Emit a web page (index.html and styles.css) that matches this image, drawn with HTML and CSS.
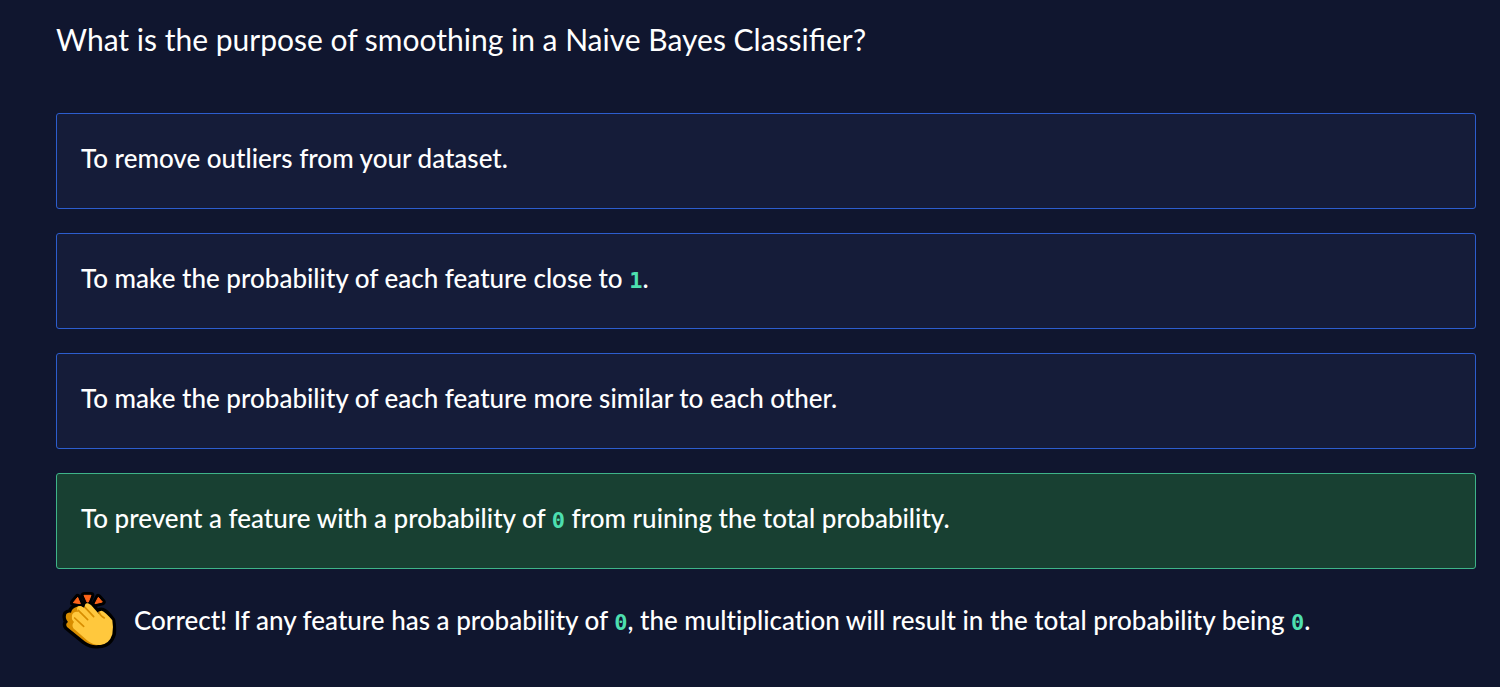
FILE: index.html
```html
<!DOCTYPE html>
<html lang="en">
<head>
<meta charset="utf-8">
<meta name="viewport" content="width=device-width, initial-scale=1">
<title>Naive Bayes Quiz</title>
<link rel="stylesheet" href="styles.css">
</head>
<body>
<main class="quiz">
  <h1 class="question">What is the purpose of smoothing in a Naive Bayes Classifier?</h1>
  <div class="options">
    <button class="option" type="button">To remove outliers from your dataset.</button>
    <button class="option" type="button">To make the probability of each feature close to <code>1</code>.</button>
    <button class="option" type="button">To make the probability of each feature more similar to each other.</button>
    <button class="option correct" type="button">To prevent a feature with a probability of <code>0</code> from ruining the total probability.</button>
  </div>
  <div class="feedback" role="status">
    <svg class="clap" viewBox="36 30 168 180" aria-hidden="true">
      <g stroke="#000" stroke-width="20" stroke-linejoin="round" fill="#000">
        <path d="M70 68L83 52L92 71ZM102 46H123L114 66ZM135 71L145 52L157 66Z"/>
        <path d="M81 83Q88 75 98 82Q103 68 114 71Q119 73 145 100Q146 91 157 93Q168 96 186 121Q190 140 188 162Q178 194 147 195Q125 199 104 184L51 141Q45 132 54 126Q44 115 49 102Q54 96 63 98Q65 84 81 83Z"/>
      </g>
      <path fill="#ff6419" stroke="#ff6419" stroke-width="3" stroke-linejoin="round" d="M70 68L83 52L91 71ZM102 46H123L115 66H111ZM135 71L145 52L157 66Z"/>
      <path fill="#d88d00" d="M81 80Q88 75 98 82L165 190Q132 204 104 184L51 141Q45 132 54 126Q44 115 49 102Q54 96 63 98Q65 84 81 80Z"/>
      <path fill="#ffc83d" d="M82 82Q89 74 98 81L104 84Q103 68 114 70L123 75L149 104Q141 93 155 92Q166 95 187 121Q191 143 187 163Q178 193 150 195Q126 195 111 181L70 145Q64 134 72 126Q62 117 67 103Q72 92 84 96Q79 87 82 82Z"/>
      <path fill="none" stroke="#d88d00" stroke-width="5" stroke-linecap="round" d="M105 82L131 110M85 91L113 119M74 114L101 139M147 97Q151 108 163 114"/>
    </svg>
    <p class="message">Correct! If any feature has a probability of <code>0</code>, the multiplication will result in the total probability being <code>0</code>.</p>
  </div>
</main>
</body>
</html>
```
FILE: styles.css
```css
* {
  box-sizing: border-box;
}

body {
  margin: 0;
  background: #10162f;
  color: #fff;
  font-family: Lato, "Liberation Sans", sans-serif;
  font-size: 26px;
  font-weight: 500;
  font-variant-ligatures: none;
  line-height: 38px;
}

.quiz {
  padding: 20px 24px 36px 56px;
}

.question {
  margin: 0 0 55px;
  font-size: 30px;
  font-weight: 400;
  font-variant-ligatures: normal;
  line-height: 38px;
}

.options {
  display: grid;
  gap: 24px;
}

.option {
  min-height: 96px;
  padding: 24px 24px 30px;
  border: 1px solid #2c5dce;
  border-radius: 3px;
  background: #151c39;
  color: inherit;
  font: inherit;
  font-variant-ligatures: none;
  text-align: left;
  cursor: pointer;
}

.option.correct {
  border-color: #3eb489;
  background: #184032;
}

code {
  color: #4ddfaf;
  font-family: "DejaVu Sans Mono", monospace;
  font-size: 22px;
  font-weight: 700;
  line-height: 1;
}

.feedback {
  display: flex;
  align-items: center;
  gap: 16px;
  margin-top: 21px;
  padding-left: 6px;
}

.clap {
  flex: none;
  width: 56px;
  height: 60px;
}

.message {
  margin: 0;
}
```
